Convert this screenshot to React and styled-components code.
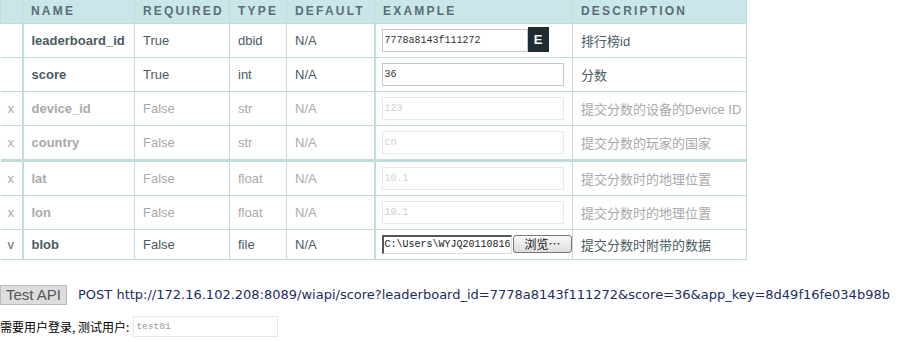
import styled, { createGlobalStyle } from "styled-components";

const GlobalStyle = createGlobalStyle`
  body {
    margin: 0;
    background: #fff;
    font-family: "Liberation Sans", Arial, "Noto Sans CJK SC", sans-serif;
  }
`;

const Page = styled.div`
  display: flex;
  flex-direction: column;
`;

const Table = styled.table`
  width: 746px;
  table-layout: fixed;
  border-collapse: collapse;
  font-size: 13px;
`;

const Th = styled.th`
  box-sizing: border-box;
  width: ${(p) => p.$w}px;
  height: 23px;
  padding: 0 0 0 8px;
  background: #c9e6e9;
  border: 1px solid #c3dcdb;
  border-top: none;
  text-align: left;
  font-size: 12px;
  font-weight: bold;
  letter-spacing: 2.2px;
  color: #5a6d77;
`;

const Row = styled.tr`
  border-bottom: ${(p) => (p.$thick ? "3px" : "1px")} solid #c3dcdb;
`;

const Td = styled.td`
  padding: 5px 8px;
  border-left: ${(p) => (p.$thick ? "2px" : "1px")} solid #c3dcdb;
  border-right: 1px solid #c3dcdb;
  font-family: "Liberation Sans", Arial, "Noto Sans CJK SC", sans-serif;
  font-weight: ${(p) => (p.$bold ? "bold" : "normal")};
  color: ${(p) => (p.$off ? "#a9a9a9" : "#4a5b63")};
  white-space: nowrap;
  overflow: visible;
`;

const Flag = styled(Td)`
  padding: 5px 0 5px 7px;
  border-left: none;
  color: ${(p) => (p.$off ? "#a9a9a9" : "#666")};
`;

const ExampleCell = styled(Td)`
  padding: 5px 0 5px 6px;
`;

const InputWrap = styled.div`
  display: flex;
  align-items: center;
`;

const TextInput = styled.input`
  box-sizing: border-box;
  width: ${(p) => p.$w}px;
  height: 23px;
  padding: 0 2px;
  border: 1px solid ${(p) => (p.disabled ? "#e8e8e8" : "#c8c8c8")};
  background: #fff;
  font-family: "Liberation Mono", "DejaVu Sans Mono", monospace;
  font-size: 10px;
  color: ${(p) => (p.disabled ? "#d0d0d0" : "#333")};
  outline: none;
`;

const EButton = styled.span`
  display: flex;
  align-items: center;
  justify-content: center;
  width: 21px;
  height: 25px;
  margin: -2px 0 0;
  background: #1f2d33;
  color: #fff;
  font-weight: bold;
  font-size: 13px;
`;

const FileBox = styled.div`
  display: flex;
  align-items: center;
  gap: 1px;
`;

const FileName = styled.span`
  box-sizing: border-box;
  width: 132px;
  height: 19px;
  padding: 0 0 0 1px;
  border-top: 2px solid #555;
  border-left: 2px solid #555;
  border-right: 1px solid #ddd;
  border-bottom: 1px solid #ddd;
  font-family: "Liberation Mono", "DejaVu Sans Mono", monospace;
  font-size: 10px;
  line-height: 16px;
  color: #222;
  white-space: nowrap;
  overflow: hidden;
`;

const BrowseButton = styled.span`
  box-sizing: border-box;
  width: 60px;
  height: 18px;
  border: 1px solid #777;
  border-radius: 3px;
  background: linear-gradient(#fafafa, #dcdcdc);
  font-size: 12px;
  line-height: 16px;
  text-align: center;
  color: #111;
  font-family: "Noto Sans CJK SC", sans-serif;
`;

const ApiLine = styled.div`
  display: flex;
  align-items: center;
  gap: 11px;
  margin-top: 25px;
`;

const TestButton = styled.button`
  height: 20px;
  padding: 0 5px;
  background: #ddd;
  border: 1px solid #bbb;
  color: #555;
  font-family: "Liberation Sans", Arial, sans-serif;
  font-size: 15px;
  line-height: 18px;
`;

const Url = styled.span`
  font-family: "DejaVu Sans", Verdana, sans-serif;
  font-size: 13px;
  color: #1b2d63;
`;

const LoginLine = styled.div`
  display: flex;
  align-items: center;
  gap: 4px;
  margin-top: 11px;
  font-size: 12px;
  color: #000;
  font-family: "Noto Sans CJK SC", sans-serif;
`;

const UserInput = styled.input`
  box-sizing: border-box;
  width: 145px;
  height: 21px;
  padding: 0 2px;
  border: 1px solid #e6e6e6;
  font-family: "Liberation Mono", monospace;
  font-size: 9.5px;
  color: #999;
  outline: none;
`;

const columns = [
  ["", 22],
  ["NAME", 112],
  ["REQUIRED", 95],
  ["TYPE", 57],
  ["DEFAULT", 88],
  ["EXAMPLE", 198],
  ["DESCRIPTION", 174],
];

const params = [
  { flag: "", name: "leaderboard_id", req: "True", type: "dbid", value: "7778a8143f111272", desc: "排行榜id", kind: "e" },
  { flag: "", name: "score", req: "True", type: "int", value: "36", desc: "分数" },
  { flag: "x", name: "device_id", req: "False", type: "str", value: "123", desc: "提交分数的设备的Device ID", off: true },
  { flag: "x", name: "country", req: "False", type: "str", value: "cn", desc: "提交分数的玩家的国家", off: true, thick: true },
  { flag: "x", name: "lat", req: "False", type: "float", value: "10.1", desc: "提交分数时的地理位置", off: true },
  { flag: "x", name: "lon", req: "False", type: "float", value: "10.1", desc: "提交分数时的地理位置", off: true },
  { flag: "v", name: "blob", req: "False", type: "file", value: "C:\\Users\\WYJQ20110816", desc: "提交分数时附带的数据", kind: "file" },
];

const Example = ({ p }) => {
  if (p.kind === "file") {
    return (
      <FileBox>
        <FileName>{p.value}</FileName>
        <BrowseButton>浏览…</BrowseButton>
      </FileBox>
    );
  }
  return (
    <InputWrap>
      <TextInput
        $w={p.kind === "e" ? 146 : 182}
        defaultValue={p.value}
        disabled={p.off}
      />
      {p.kind === "e" && <EButton>E</EButton>}
    </InputWrap>
  );
};

const App = () => {
  return (
    <Page>
      <GlobalStyle />
      <Table>
        <thead>
          <tr>
            {columns.map(([label, w]) => (
              <Th key={label || "flag"} $w={w}>
                {label}
              </Th>
            ))}
          </tr>
        </thead>
        <tbody>
          {params.map((p) => (
            <Row key={p.name} $thick={p.thick}>
              <Flag $off={p.off}>{p.flag}</Flag>
              <Td $thick $bold $off={p.off}>{p.name}</Td>
              <Td $off={p.off}>{p.req}</Td>
              <Td $off={p.off}>{p.type}</Td>
              <Td $off={p.off}>N/A</Td>
              <ExampleCell $thick>
                <Example p={p} />
              </ExampleCell>
              <Td $off={p.off}>{p.desc}</Td>
            </Row>
          ))}
        </tbody>
      </Table>
      <ApiLine>
        <TestButton>Test API</TestButton>
        <Url>
          POST http://172.16.102.208:8089/wiapi/score?leaderboard_id=7778a8143f111272&amp;score=36&amp;app_key=8d49f16fe034b98b
        </Url>
      </ApiLine>
      <LoginLine>
        需要用户登录, 测试用户:
        <UserInput defaultValue="test01" />
      </LoginLine>
    </Page>
  );
};

export default App;
